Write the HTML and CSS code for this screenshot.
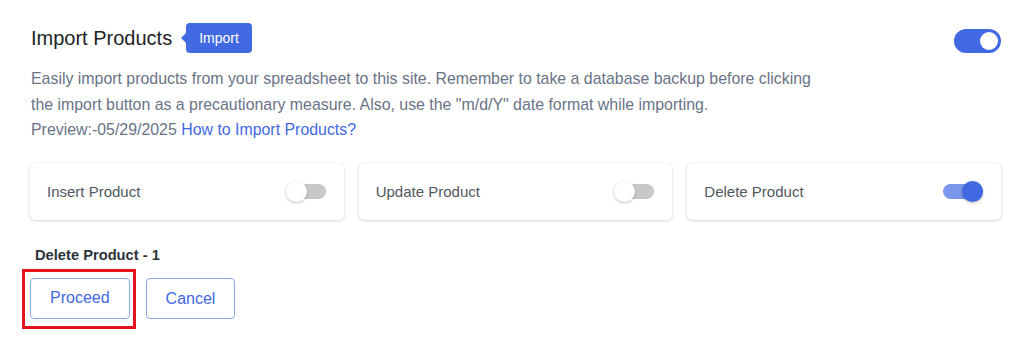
FILE: index.html
```html
<!DOCTYPE html>
<html>
<head>
<meta charset="utf-8">
<link rel="stylesheet" href="styles.css">
</head>
<body>
<div class="page">
  <div class="header">
    <div class="title-wrap">
      <h1 class="title">Import Products</h1>
      <span class="badge">Import</span>
    </div>
    <span class="switch switch-main"><span class="knob"></span></span>
  </div>
  <p class="desc">Easily import products from your spreadsheet to this site. Remember to take a database backup before clicking the import button as a precautionary measure. Also, use the "m/d/Y" date format while importing.<br>Preview:-05/29/2025 <a class="link" href="#">How to Import Products?</a></p>
  <div class="cards">
    <div class="card"><span class="card-label">Insert Product</span><span class="toggle"><span class="dot"></span></span></div>
    <div class="card"><span class="card-label">Update Product</span><span class="toggle"><span class="dot"></span></span></div>
    <div class="card"><span class="card-label">Delete Product</span><span class="toggle on"><span class="dot"></span></span></div>
  </div>
  <div class="summary">Delete Product - 1</div>
  <div class="actions">
    <span class="highlight"><button class="btn">Proceed</button></span>
    <button class="btn">Cancel</button>
  </div>
</div>
</body>
</html>
```

FILE: styles.css
```css
html, body {
  margin: 0;
  padding: 0;
  background: #ffffff;
}
body {
  font-family: "Liberation Sans", Arial, sans-serif;
}
.page {
  padding: 23px 23px 0 30px;
}
.header {
  display: flex;
  align-items: center;
  justify-content: space-between;
  height: 30px;
}
.title-wrap {
  display: flex;
  align-items: center;
}
.title {
  margin: 1px 0 0 1px;
  font-size: 20px;
  font-weight: normal;
  color: #1d2327;
}
.badge {
  position: relative;
  margin-left: 14px;
  background: #4169e1;
  color: #ffffff;
  font-size: 14px;
  padding: 0 13px;
  height: 30px;
  line-height: 30px;
  border-radius: 4px;
}
.badge::before {
  content: "";
  position: absolute;
  left: -5px;
  top: 10px;
  border-top: 5px solid transparent;
  border-bottom: 5px solid transparent;
  border-right: 5px solid #4169e1;
}
.switch {
  position: relative;
  display: inline-block;
  width: 47px;
  height: 24px;
  border-radius: 12px;
  background: #4169e1;
  margin-top: 5px;
}
.switch .knob {
  position: absolute;
  right: 3px;
  top: 3px;
  width: 18px;
  height: 18px;
  border-radius: 50%;
  background: #ffffff;
}
.desc {
  margin: 13px 0 0 1px;
  width: 795px;
  font-size: 15.9px;
  line-height: 25.5px;
  color: #697386;
}
.link {
  color: #4169e1;
  text-decoration: none;
}
.cards {
  display: grid;
  grid-template-columns: repeat(3, 1fr);
  gap: 15px;
  margin-top: 20px;
}
.card {
  display: flex;
  align-items: center;
  justify-content: space-between;
  height: 57px;
  padding: 0 18px 0 17px;
  background: #ffffff;
  border-radius: 5px;
  box-shadow: 0 1px 3px rgba(30, 40, 80, 0.18), 0 0 1px rgba(30, 40, 80, 0.15);
  box-sizing: border-box;
}
.card-label {
  font-size: 15px;
  color: #50575e;
}
.toggle {
  position: relative;
  display: inline-block;
  width: 40px;
  height: 15px;
  border-radius: 8px;
  background: #c8c8c8;
}
.toggle .dot {
  position: absolute;
  left: 0;
  top: -3px;
  width: 21px;
  height: 21px;
  border-radius: 50%;
  background: #ffffff;
  box-shadow: 0 1px 3px rgba(0, 0, 0, 0.25);
}
.toggle.on {
  background: #7b97ec;
}
.toggle.on .dot {
  left: auto;
  right: 0;
  background: #4169e1;
}
.summary {
  margin: 27px 0 0 5px;
  font-size: 14.7px;
  font-weight: bold;
  color: #2c3338;
}
.actions {
  display: flex;
  align-items: center;
  gap: 10px;
  margin: 6px 0 0 -8px;
}
.highlight {
  display: inline-block;
  border: 3px solid #e3141d;
  padding: 6px 3px 7px 5px;
}
.btn {
  font-family: "Liberation Sans", Arial, sans-serif;
  font-size: 16px;
  color: #4169e1;
  background: #ffffff;
  border: 1px solid #8ea5ec;
  border-radius: 4px;
  height: 41px;
  padding: 0 19px;
  cursor: pointer;
}
```
